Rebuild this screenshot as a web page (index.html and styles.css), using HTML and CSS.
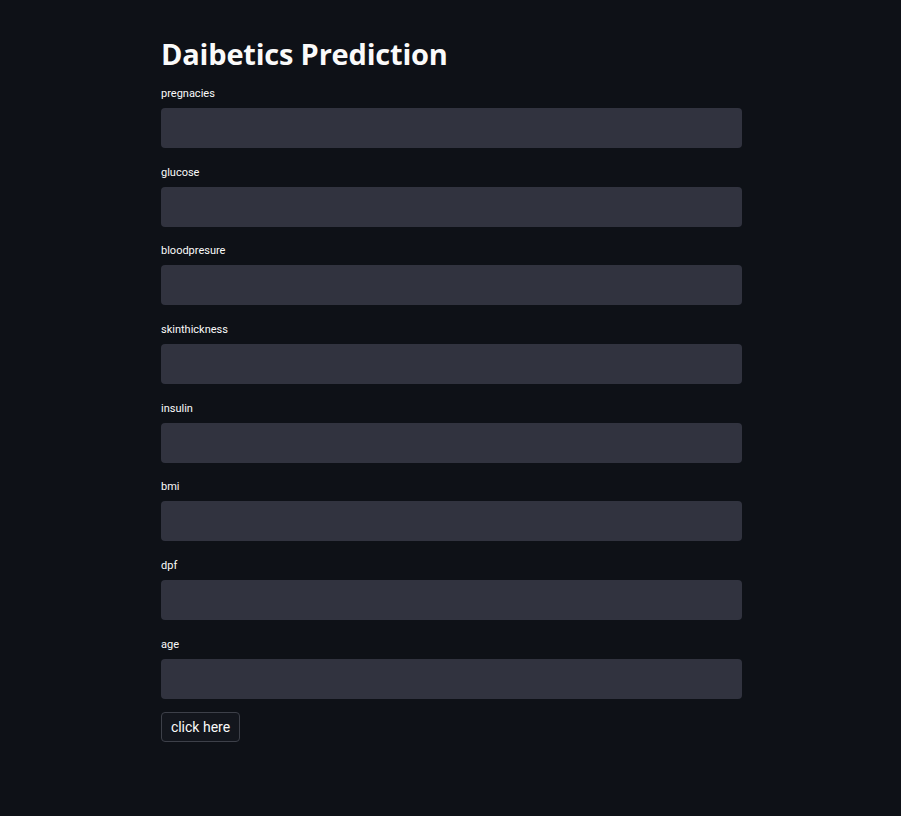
FILE: index.html
```html
<!DOCTYPE html>
<html>
<head>
<meta charset="utf-8">
<link rel="stylesheet" href="styles.css">
</head>
<body>
<main class="app">
  <h1 class="title">Daibetics Prediction</h1>
  <div class="form">
    <div class="field"><label class="label">pregnacies</label><div class="input"></div></div>
    <div class="field"><label class="label">glucose</label><div class="input"></div></div>
    <div class="field"><label class="label">bloodpresure</label><div class="input"></div></div>
    <div class="field"><label class="label">skinthickness</label><div class="input"></div></div>
    <div class="field"><label class="label">insulin</label><div class="input"></div></div>
    <div class="field"><label class="label">bmi</label><div class="input"></div></div>
    <div class="field"><label class="label">dpf</label><div class="input"></div></div>
    <div class="field"><label class="label">age</label><div class="input"></div></div>
  </div>
  <button class="btn">click here</button>
</main>
</body>
</html>
```
FILE: styles.css
```css
html, body {
  margin: 0;
  padding: 0;
  background: #0e1117;
  height: 100%;
}
body {
  font-family: Roboto, "Noto Sans", "Liberation Sans", sans-serif;
  color: #fafafa;
}
.app {
  width: 581px;
  margin-left: 161px;
  padding-top: 34px;
  box-sizing: border-box;
}
.title {
  margin: 0;
  font-family: "Open Sans", "Noto Sans", sans-serif;
  font-weight: 700;
  font-size: 29px;
  line-height: 40px;
  height: 52px;
  letter-spacing: -0.2px;
}
.form {
  display: flex;
  flex-direction: column;
  gap: 16.7px;
}
.field {
  display: flex;
  flex-direction: column;
}
.label {
  font-size: 11px;
  line-height: 14px;
  height: 21px;
  padding-top: 1px;
  color: #fafafa;
}
.input {
  height: 40px;
  background: #31333f;
  border-radius: 4px;
}
.btn {
  margin-top: 13px;
  height: 30px;
  width: 79px;
  padding: 0;
  background: #13161d;
  border: 1px solid #3d4049;
  border-radius: 4px;
  color: #fafafa;
  font-family: Roboto, "Noto Sans", sans-serif;
  font-size: 14px;
}
```
